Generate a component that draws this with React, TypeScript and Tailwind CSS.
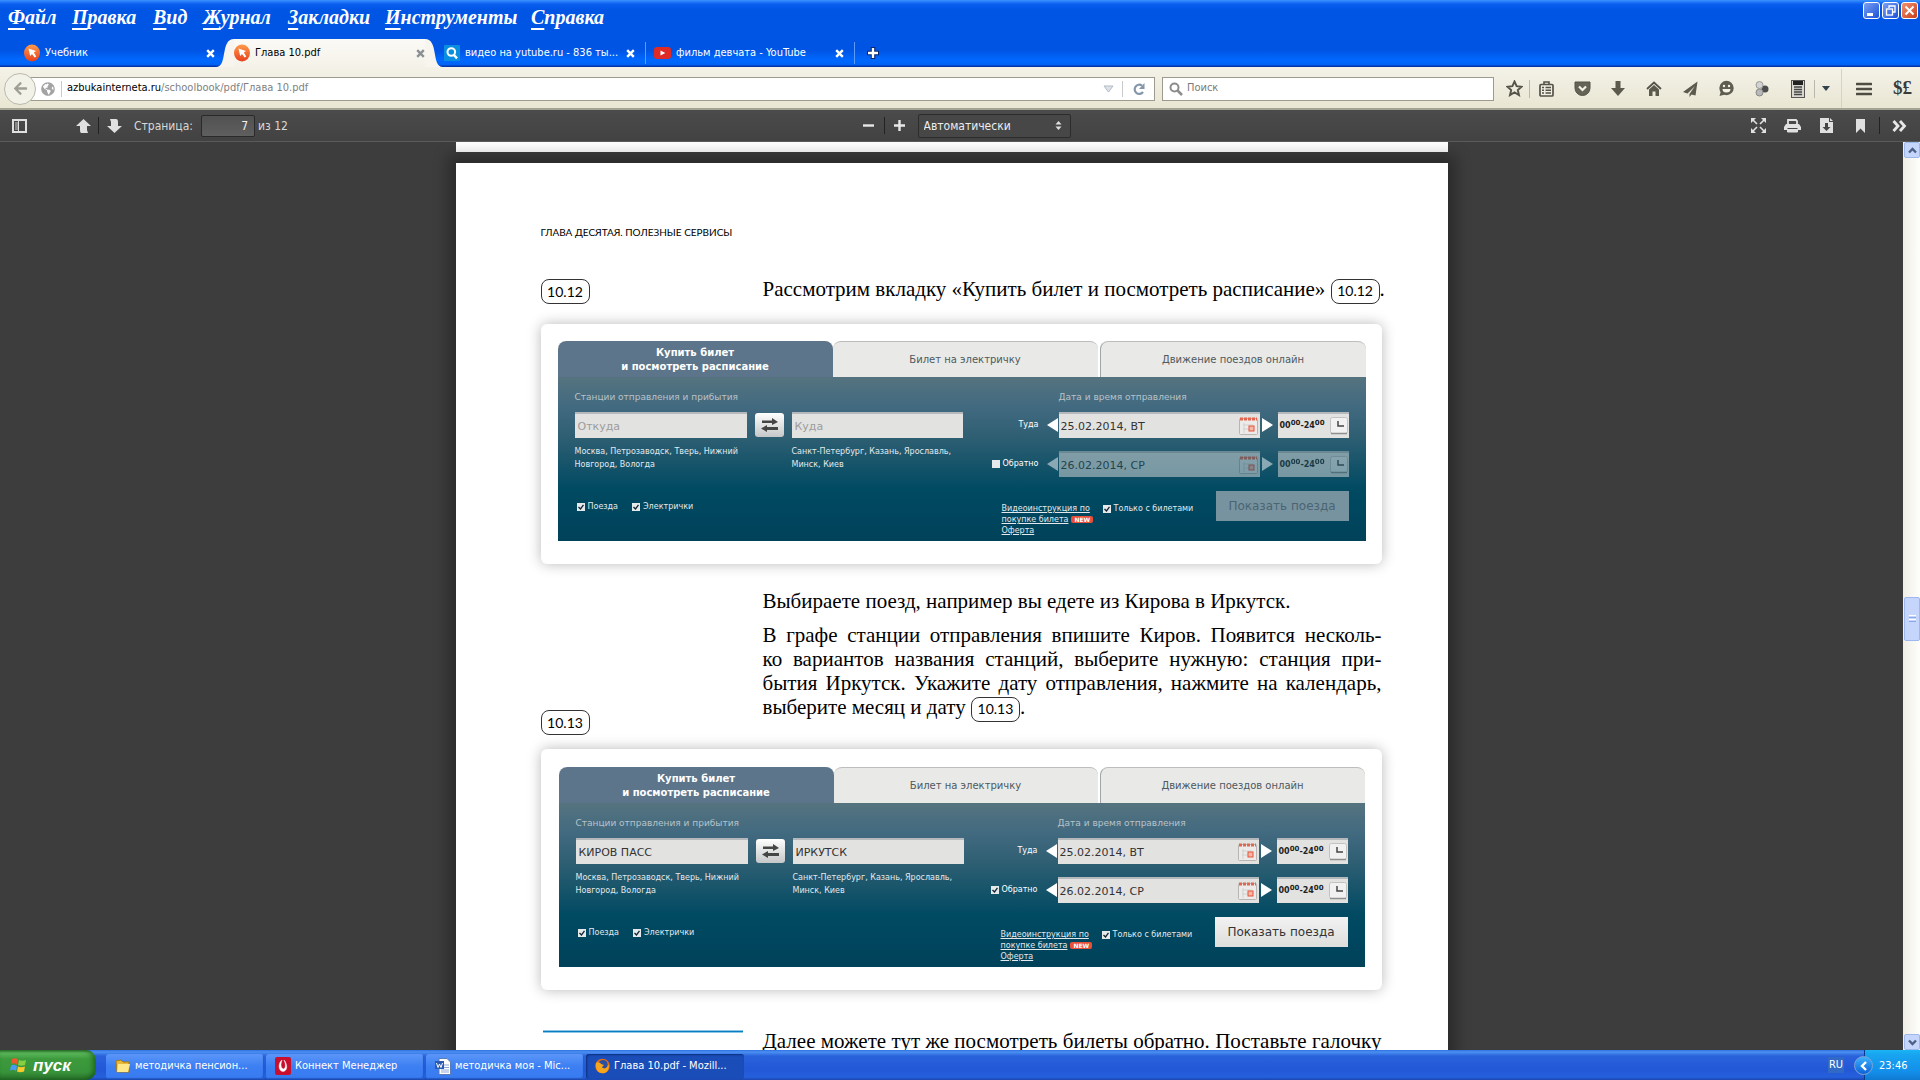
import React from "react";
import { FaArrowLeft, FaGlobeAmericas } from "react-icons/fa";

const ui = "font-['DejaVu_Sans_Condensed','DejaVu_Sans',sans-serif]";

const menus = [
  { first: "Ф", rest: "айл", w: "w-[64px]" },
  { first: "П", rest: "равка", w: "w-[81px]" },
  { first: "В", rest: "ид", w: "w-[50px]" },
  { first: "Ж", rest: "урнал", w: "w-[85px]" },
  { first: "З", rest: "акладки", w: "w-[97px]" },
  { first: "И", rest: "нструменты", w: "w-[146px]" },
  { first: "С", rest: "правка", w: "w-[80px]" },
];

function CloseX({ color }: { color: string }) {
  return (
    <button type="button" aria-label="Закрыть вкладку" className="shrink-0">
      <svg width="9" height="9" viewBox="0 0 9 9">
        <path d="M1.2 1.2L7.8 7.8M7.8 1.2L1.2 7.8" stroke={color} strokeWidth="2.4" />
      </svg>
    </button>
  );
}

function BookIcon() {
  return (
    <svg width="16" height="18" viewBox="0 0 16 18" className="shrink-0">
      <defs>
        <linearGradient id="orange" x1="0" y1="0" x2="0" y2="1">
          <stop offset="0" stopColor="#ff9a4a" />
          <stop offset="1" stopColor="#e8401c" />
        </linearGradient>
      </defs>
      <ellipse cx="8" cy="9" rx="8" ry="8.5" fill="url(#orange)" />
      <path d="M4.5 4.5L12 7L9.8 8.5L12.3 12.4L10.6 13.6L8 9.9L6.2 12z" fill="#fff" />
    </svg>
  );
}

function SearchTabIcon() {
  return (
    <svg width="16" height="16" viewBox="0 0 16 16" className="shrink-0">
      <rect width="16" height="16" rx="1" fill="#0a8ee0" />
      <circle cx="7.3" cy="7" r="3.8" fill="none" stroke="#fff" strokeWidth="2" />
      <path d="M10 10L13 13.4" stroke="#fff" strokeWidth="2.4" />
    </svg>
  );
}

function YoutubeIcon() {
  return (
    <svg width="17" height="12" viewBox="0 0 17 12" className="shrink-0">
      <rect width="17" height="12" rx="3" fill="#df2a26" />
      <path d="M6.5 3.5L11.3 6L6.5 8.5z" fill="#fff" />
    </svg>
  );
}

function WindowButtons() {
  const base = "flex h-[17px] w-[17px] items-center justify-center rounded-[3px] border border-white";
  return (
    <div className="flex gap-[2px] pt-[2px] pr-[2px]">
      <button type="button" aria-label="Свернуть" className={base + " bg-gradient-to-br from-[#7b9ff0] to-[#1a4fd8]"}>
        <svg width="13" height="13" viewBox="0 0 13 13"><rect x="2" y="9" width="6" height="3" fill="#fff" /></svg>
      </button>
      <button type="button" aria-label="Восстановить" className={base + " bg-gradient-to-br from-[#7b9ff0] to-[#1a4fd8]"}>
        <svg width="13" height="13" viewBox="0 0 13 13" fill="none" stroke="#fff"><path d="M5 4V2H11V8H9" strokeWidth="1.3" /><rect x="2.5" y="5" width="6" height="6" strokeWidth="1.3" /></svg>
      </button>
      <button type="button" aria-label="Закрыть" className={base + " bg-gradient-to-br from-[#f0916f] to-[#c93a12]"}>
        <svg width="13" height="13" viewBox="0 0 13 13"><path d="M2.5 2.5L10.5 10.5M10.5 2.5L2.5 10.5" stroke="#fff" strokeWidth="2" /></svg>
      </button>
    </div>
  );
}

function TitleArea() {
  return (
    <header className="flex shrink-0 flex-col bg-[linear-gradient(to_bottom,#3a93ff_0,#0a5ef0_4px,#0055e5_10px,#0054e3_50px,#0068ff_60px,#0062f4_65px,#0434a8_66px)]">
      <div className="flex h-[39px] items-start justify-between">
        <nav className="flex h-[34px] pl-2 font-['Liberation_Serif',serif] text-[20px] font-bold text-white italic">
          {menus.map((m) => (
            <button type="button" key={m.first + m.rest} className={"text-left whitespace-nowrap " + m.w}>
              <span className="underline underline-offset-4">{m.first}</span>
              {m.rest}
            </button>
          ))}
        </nav>
        <WindowButtons />
      </div>
      <div className={"flex h-[28px] shrink-0 text-[11px] text-white " + ui}>
        <div className="flex w-[216px] items-center gap-[5px] pr-px pl-6">
          <BookIcon />
          <span className="flex-1">Учебник</span>
          <CloseX color="#fff" />
        </div>
        <svg width="18" height="28" viewBox="0 0 18 28"><path d="M0 28C12 28 4 0 18 0V28z" fill="#f7f5ee" /></svg>
        <div className="flex w-[191px] items-center gap-[5px] bg-gradient-to-b from-[#fbfaf6] to-[#f4f2e8] text-black">
          <BookIcon />
          <span className="flex-1">Глава 10.pdf</span>
          <CloseX color="#8b8f96" />
        </div>
        <svg width="18" height="28" viewBox="0 0 18 28"><path d="M18 28C6 28 14 0 0 0V28z" fill="#f7f5ee" /></svg>
        <div className="flex w-[203px] items-center gap-[5px] pl-px">
          <SearchTabIcon />
          <span className="flex-1 whitespace-nowrap">видео на yutube.ru - 836 ты...</span>
          <CloseX color="#fff" />
          <span className="ml-[5px] h-[22px] w-px bg-[#5c9cff]" />
        </div>
        <div className="flex w-[209px] items-center gap-[5px] pl-2">
          <YoutubeIcon />
          <span className="flex-1 whitespace-nowrap">фильм девчата - YouTube</span>
          <CloseX color="#fff" />
          <span className="ml-[5px] h-[22px] w-px bg-[#5c9cff]" />
        </div>
        <button type="button" aria-label="Новая вкладка" className="px-3">
          <svg width="12" height="12" viewBox="0 0 12 12"><path d="M6 0V12M0 6H12" stroke="#04246c" strokeWidth="4.5" /><path d="M6 1V11M1 6H11" stroke="#fff" strokeWidth="2.4" /></svg>
        </button>
      </div>
    </header>
  );
}

function Tool({ label, children, w = "w-9" }: { label: string; children: React.ReactNode; w?: string }) {
  return (
    <button type="button" aria-label={label} className={"flex h-8 items-center justify-center text-[#55524a] " + w}>
      {children}
    </button>
  );
}

function NavBar() {
  return (
    <div className={"flex h-[43px] shrink-0 items-center border-b-2 border-[#a5a392] bg-gradient-to-b from-[#f4f2e8] to-[#e9e6d3] pt-[2px] text-[11px] " + ui}>
      <button type="button" aria-label="Назад" className="z-10 ml-1 flex h-8 w-8 shrink-0 items-center justify-center rounded-full border border-[#b9b9ae] bg-[#f3f2e8] text-[#a09f95]">
        <FaArrowLeft size={15} />
      </button>
      <div className="-ml-2 flex h-6 flex-1 items-center border border-[#9c9b8d] bg-white pl-[12px]">
        <FaGlobeAmericas size={14} className="shrink-0 text-[#a3a3a3]" />
        <span className="mr-[5px] ml-[6px] h-4 w-px bg-[#c9c9c9]" />
        <label className="flex flex-1 items-center">
          <span className="text-black">azbukainterneta.ru</span>
          <span className="text-[#7f7f7f]">/schoolbook/pdf/Глава 10.pdf</span>
          <input aria-label="Адрес" className="w-4 flex-1 outline-none" />
        </label>
        <svg width="11" height="8" viewBox="0 0 11 8"><path d="M1 1H10L5.500 7z" fill="#dde3ea" stroke="#b3bac2" /></svg>
        <span className="mx-2 h-4 w-px bg-[#c9c9c9]" />
        <button type="button" aria-label="Обновить" className="mr-2 ml-[1px]">
          <svg width="14" height="14" viewBox="0 0 14 14"><path d="M11 10A4.600 4.600 0 1 1 10 3.600" fill="none" stroke="#8496a9" strokeWidth="2.200" /><path d="M12.500 1V7H7z" fill="#8496a9" /></svg>
        </button>
      </div>
      <label className="ml-[7px] flex h-6 w-[332px] items-center gap-1 border border-[#9c9b8d] bg-white pl-[6px]">
        <svg width="14" height="14" viewBox="0 0 14 14"><circle cx="5.500" cy="5.500" r="4" fill="none" stroke="#8c8c8c" strokeWidth="2" /><path d="M8.500 8.500L13 13" stroke="#8c8c8c" strokeWidth="2.500" /></svg>
        <input placeholder="Поиск" aria-label="Поиск" className="flex-1 outline-none placeholder:text-[#7a7a7a]" />
      </label>
      <div className="flex items-center pl-[5px]">
        <Tool label="Добавить закладку" w="w-[30px]">
          <svg width="17" height="17" viewBox="0 0 17 17"><path d="M8.500 1.500L10.600 6.200L15.600 6.700L11.800 10L13 15L8.500 12.400L4 15L5.200 10L1.400 6.700L6.400 6.200z" fill="none" stroke="#55524a" strokeWidth="1.900" /></svg>
        </Tool>
        <span className="h-[18px] w-px bg-[#b8b8ae]" />
        <Tool label="Закладки" w="w-8">
          <svg width="15" height="16" viewBox="0 0 15 16"><path d="M5 3V1H10V3" fill="none" stroke="#55524a" strokeWidth="1.600" /><rect x="1" y="3.500" width="13" height="11.500" rx="1" fill="#f0eee0" stroke="#55524a" strokeWidth="1.700" /><path d="M3 6.500H5M6.500 6.500H12M3 9.300H5M6.500 9.300H12M3 12H5M6.500 12H12" stroke="#55524a" strokeWidth="1.500" /></svg>
        </Tool>
        <Tool label="Pocket" w="w-10">
          <svg width="17" height="15" viewBox="0 0 17 15"><path d="M1 1H16V7A7.500 7.500 0 0 1 1 7z" fill="#656256" stroke="#55524a" /><path d="M5 5.500L8.500 9L12 5.500" fill="none" stroke="#f4f2e6" strokeWidth="2.200" /></svg>
        </Tool>
        <Tool label="Загрузки" w="w-8">
          <svg width="14" height="15" viewBox="0 0 14 15"><path d="M4.500 0H9.500V7H14L7 15L0 7H4.500z" fill="#5c594d" /></svg>
        </Tool>
        <Tool label="Домой" w="w-10">
          <svg width="16" height="15" viewBox="0 0 16 15"><path d="M1 8L8 1.500L15 8" fill="none" stroke="#55524a" strokeWidth="1.800" /><path d="M3 8.500L8 4L13 8.500V15H9.500V10.500H6.500V15H3z" fill="#5c594d" /></svg>
        </Tool>
        <Tool label="Отправить" w="w-8">
          <svg width="15" height="16" viewBox="0 0 15 16"><path d="M14.500 .5L0 11L4.500 12.500L12 5L6.500 13L6.500 16L8.500 13.600L12.500 14.500z" fill="#5c594d" /></svg>
        </Tool>
        <Tool label="Чат" w="w-10">
          <svg width="17" height="17" viewBox="0 0 17 17"><circle cx="8.500" cy="8" r="7.200" fill="#5f5c50" /><path d="M3 11L1.500 16L7 14.500z" fill="#5f5c50" /><circle cx="6" cy="6" r="1.200" fill="#f4f2e6" /><circle cx="11" cy="6" r="1.200" fill="#f4f2e6" /><path d="M4.500 9H12.500A4 3.500 0 0 1 4.500 9z" fill="#f4f2e6" /></svg>
        </Tool>
        <Tool label="Расширение" w="w-8">
          <svg width="14" height="16" viewBox="0 0 14 16"><circle cx="10" cy="8" r="3.500" fill="#4c4c4c" /><circle cx="4.500" cy="4" r="3.500" fill="#d2d2d2" stroke="#999" /><circle cx="4.500" cy="11.500" r="3.500" fill="#b8b8b8" stroke="#888" /></svg>
        </Tool>
        <Tool label="Счётчик" w="w-10">
          <svg width="14" height="18" viewBox="0 0 14 18"><rect x=".5" y=".5" width="13" height="17" fill="#d8d8d0" stroke="#555" /><rect x="2" y="1" width="10" height="4" fill="#222" /><path d="M3 7H11M3 9.500H11M3 12H11M3 14.500H11" stroke="#444" strokeWidth="1.400" /></svg>
        </Tool>
        <span className="-ml-1 h-[18px] w-px bg-[#b8b8ae]" />
        <Tool label="Ещё" w="w-[22px]"><svg width="8" height="5" viewBox="0 0 8 5"><path d="M0 0H8L4 5z" fill="#33424f" /></svg></Tool>
        <span className="ml-1 h-[39px] w-px bg-[#d5d3c4]" />
        <Tool label="Меню" w="w-[43px]"><svg width="16" height="14" viewBox="0 0 16 14"><path d="M1 2H15M1 7H15M1 12H15" stroke="#4e4b43" strokeWidth="2.600" strokeLinecap="round" /></svg></Tool>
        <button type="button" className="w-[35px] text-center font-['Liberation_Serif',serif] text-[19px] font-bold text-[#3a3a3a]">$£</button>
      </div>
    </div>
  );
}

function PdfButton({ label, children }: { label: string; children: React.ReactNode }) {
  return (
    <button type="button" aria-label={label} className="flex h-6 w-[30px] items-center justify-center text-[#e0e0e0]">
      {children}
    </button>
  );
}

function Divider() {
  return <span className="h-[17px] w-px bg-[#222]" />;
}

function PdfToolbar() {
  return (
    <div className={"grid h-[32px] shrink-0 grid-cols-[1fr_auto_1fr] items-center border-b border-[#5a5a5a] bg-gradient-to-b from-[#4b4b4b] to-[#424242] text-[12px] text-[#d9d9d9] " + ui}>
      <div className="flex items-center pl-1">
        <PdfButton label="Боковая панель">
          <svg width="15" height="14" viewBox="0 0 15 14"><rect x="1" y="1" width="13" height="12" fill="none" stroke="#e0e0e0" strokeWidth="2" /><rect x="3" y="3" width="3" height="8" fill="#888" /><path d="M6.500 2V12" stroke="#e0e0e0" /></svg>
        </PdfButton>
        <span className="w-[34px]" />
        <PdfButton label="Предыдущая страница">
          <svg width="15" height="14" viewBox="0 0 15 14"><path d="M7.500 0L15 7H11V11L12 14H5Q4 14 4 11V7H0z" fill="#e0e0e0" /></svg>
        </PdfButton>
        <Divider />
        <PdfButton label="Следующая страница">
          <svg width="15" height="14" viewBox="0 0 15 14"><path d="M7.500 14L15 7H11V3Q11 0 9 0H3L4 3V7H0z" fill="#e0e0e0" /></svg>
        </PdfButton>
        <label className="flex items-center pl-[5px]">
          <span className="w-[67px]">Страница:</span>
          <input defaultValue="7" className="h-[22px] w-[54px] rounded-[2px] border border-[#2a2a2a] bg-gradient-to-b from-[#515151] to-[#5f5f5f] pr-[6px] text-right text-[#f0f0f0]" />
        </label>
        <span className="pl-[3px]">из 12</span>
      </div>
      <div className="flex items-center pl-1">
        <PdfButton label="Уменьшить"><svg width="11" height="11" viewBox="0 0 11 11"><path d="M0 5.500H11" stroke="#e8e8e8" strokeWidth="2.400" /></svg></PdfButton>
        <Divider />
        <PdfButton label="Увеличить"><svg width="11" height="11" viewBox="0 0 11 11"><path d="M0 5.500H11M5.500 0V11" stroke="#e8e8e8" strokeWidth="2.400" /></svg></PdfButton>
        <div className="relative ml-[3px]">
          <select aria-label="Масштаб" className="h-6 w-[153px] appearance-none rounded-[2px] border border-[#2c2c2c] bg-[#474747] pl-[5px] text-[12px] text-[#ededed]">
            <option>Автоматически</option>
          </select>
          <svg width="7" height="9" viewBox="0 0 7 9" className="pointer-events-none absolute top-[7px] right-[9px]"><path d="M3.500 0L6.500 3.500H.5zM3.500 9L.5 5.500H6.500z" fill="#e0e0e0" /></svg>
        </div>
      </div>
      <div className="flex items-center justify-end gap-1 pr-[6px]">
        <PdfButton label="Во весь экран"><svg width="15" height="15" viewBox="0 0 15 15"><path d="M0 0H5L0 5zM15 0V5L10 0zM0 15V10L5 15zM15 15H10L15 10z" fill="#e0e0e0" /><path d="M1 1L6 6M14 1L9 6M1 14L6 9M14 14L9 9" stroke="#e0e0e0" strokeWidth="1.600" /></svg></PdfButton>
        <PdfButton label="Печать"><svg width="17" height="14" viewBox="0 0 17 14"><path d="M4 5V1H12L13 2V5" fill="none" stroke="#e0e0e0" strokeWidth="1.800" /><path d="M2 5H15L17 8V11H14V9H3V11H0V8z" fill="#e0e0e0" /><path d="M3.500 9V13H13.500V9" fill="#e0e0e0" stroke="#e0e0e0" /><path d="M3.500 9.500H13.500" stroke="#444" /></svg></PdfButton>
        <PdfButton label="Скачать"><svg width="13" height="15" viewBox="0 0 13 15"><path d="M0 0H9V4H13V15H0z" fill="#e0e0e0" /><path d="M10 0L13 3H10z" fill="#e0e0e0" /><path d="M6.500 13L2.500 9H5V5H8V9H10.500z" fill="#444" /></svg></PdfButton>
        <PdfButton label="Закладка"><svg width="9" height="14" viewBox="0 0 9 14"><path d="M0 0H9V14L4.500 9.500L0 14z" fill="#e0e0e0" /></svg></PdfButton>
        <Divider />
        <PdfButton label="Инструменты"><svg width="15" height="12" viewBox="0 0 15 12"><path d="M1.500 1L6 6L1.500 11M8 1L12.500 6L8 11" fill="none" stroke="#e8e8e8" strokeWidth="2.800" /></svg></PdfButton>
      </div>
    </div>
  );
}

function Badge({ children }: { children: string }) {
  return (
    <span className="-my-1 inline-flex h-[25px] w-[49px] items-center justify-center rounded-lg border border-[#333] align-middle font-['Lato',sans-serif] text-[14px] leading-none">
      {children}
    </span>
  );
}

function Check({ label, checked }: { label: string; checked: boolean }) {
  return (
    <label className="flex items-center gap-[3px] whitespace-nowrap">
      <input type="checkbox" defaultChecked={checked} className="peer sr-only" />
      <span className="flex h-2 w-2 items-center justify-center bg-[#e6e9ea]">
        {checked && <svg width="6" height="6" viewBox="0 0 6 6"><path d="M.5 3L2.500 5L5.500 .8" fill="none" stroke="#123" strokeWidth="1.300" /></svg>}
      </span>
      {label}
    </label>
  );
}

const field = "h-[26px] min-w-0 border-t-2 border-[#b5b9bb] bg-[#e2e2e1] text-[11px] leading-none outline-none";

function DateRow({ label, date, disabled = false }: { label: React.ReactNode; date: string; disabled?: boolean }) {
  const dim = disabled ? "opacity-50" : "";
  return (
    <div className="flex items-center">
      <div className="flex w-[44px] justify-end text-[8px] text-white">{label}</div>
      <div className={"flex flex-1 items-center " + dim}>
        <button type="button" aria-label="Предыдущий день" disabled={disabled} className="ml-2 w-3">
          <svg width="11" height="14" viewBox="0 0 11 14"><path d="M11 0V14L0 7z" fill="#fff" /></svg>
        </button>
        <label className={"flex flex-1 items-center pr-[2px] pl-[2px] text-[#333] " + field}>
          <input defaultValue={date} aria-label="Дата" disabled={disabled} className="min-w-0 flex-1 outline-none" />
          <svg width="19" height="18" viewBox="0 0 19 18"><rect x=".5" y="1.500" width="18" height="16" rx="1" fill="#ecebea" stroke="#b9b5b2" /><path d="M1 2H18" stroke="#e2664f" strokeWidth="3" strokeDasharray="3 1" /><path d="M4 8H14M4 12H14M5 6V16" stroke="#d3d0ce" /><rect x="10" y="9" width="5" height="5" fill="#f6b7a8" stroke="#e4553a" /></svg>
        </label>
        <button type="button" aria-label="Следующий день" disabled={disabled} className="ml-[2px] w-4">
          <svg width="11" height="14" viewBox="0 0 11 14"><path d="M0 0V14L11 7z" fill="#fff" /></svg>
        </button>
        <button type="button" aria-label="Время" disabled={disabled} className={"flex w-[71px] items-center pl-[2px] text-[#222] " + field}>
          <span className="flex-1 text-left text-[8px] font-bold whitespace-nowrap">
            00<sup className="text-[7px]">00</sup>-24<sup className="text-[7px]">00</sup>
          </span>
          <svg width="19" height="18" viewBox="0 0 19 18"><rect x=".5" y=".5" width="17" height="16" rx="2" fill="#f1f1f1" stroke="#c2c2c2" /><path d="M1 16.500H17" stroke="#8f8f8f" strokeWidth="1.500" /><path d="M8 4V9H14" fill="none" stroke="#444" strokeWidth="1.500" /></svg>
        </button>
      </div>
    </div>
  );
}

function BookingPanel({ from = "", to = "", back }: { from?: string; to?: string; back: boolean }) {
  const tab = "flex h-9 flex-1 items-center justify-center rounded-t-lg border-t border-[#bdbdbb] bg-[#e9e9e7] text-[#4d5a60]";
  return (
    <div className="h-[200px] overflow-hidden rounded-tl-lg bg-[linear-gradient(to_bottom,#5d768a_0,#55737f_37px,#426a80_65px,#2f5f73_95px,#004a62_148px,#00425a_100%)] font-['DejaVu_Sans',sans-serif]">
      <div className="flex h-9 bg-white text-[10px]">
        <button type="button" className="w-[275px] rounded-t-lg bg-[#5c758a] pt-px leading-[14px] font-bold text-white">
          Купить билет
          <br />
          и посмотреть расписание
        </button>
        <button type="button" className={tab}>Билет на электричку</button>
        <button type="button" className={tab + " ml-[2px] border-l border-l-[#9fa5a8]"}>Движение поездов онлайн</button>
      </div>
      <div className="flex justify-between pr-[17px] pl-[17px] text-[8px] text-[#e3e9ec]">
        <div className="w-[388px] pt-[14px]">
          <h3 className="h-[21px] text-[9px] leading-[12px] text-[#b9c2c8]">Станции отправления и прибытия</h3>
          <div className="grid grid-cols-[172px_29px_171px] gap-x-2">
            <input aria-label="Откуда" placeholder="Откуда" defaultValue={from} className={"w-full pl-[3px] text-[#333] placeholder:text-[#9c9c9c] " + field} />
            <button type="button" aria-label="Поменять местами" className="flex h-6 items-center justify-center self-center rounded-[3px] bg-gradient-to-b from-white to-[#c5c7c8]">
              <svg width="17" height="14" viewBox="0 0 17 14"><path d="M1 2.500H11V0L17 4L11 7V5H1zM17 9H6V7L0 10.500L6 14V12H17z" fill="#454545" /></svg>
            </button>
            <input aria-label="Куда" placeholder="Куда" defaultValue={to} className={"w-full pl-[3px] text-[#333] placeholder:text-[#9c9c9c] " + field} />
            <p className="mt-[7px] leading-[13px]">Москва, Петрозаводск, Тверь, Нижний<br />Новгород, Вологда</p>
            <span />
            <p className="mt-[7px] leading-[13px] whitespace-nowrap">Санкт-Петербург, Казань, Ярославль,<br />Минск, Киев</p>
          </div>
          <div className="flex gap-[14px] pt-[24px] pl-[2px]">
            <Check label="Поезда" checked />
            <Check label="Электрички" checked />
          </div>
        </div>
        <div className="w-[354px] pt-[14px]">
          <h3 className="h-[21px] pl-16 text-[9px] leading-[12px] text-[#b9c2c8]">Дата и время отправления</h3>
          <div className="flex flex-col gap-[13px]">
            <DateRow label="Туда" date="25.02.2014, ВТ" />
            <DateRow label={<Check label="Обратно" checked={back} />} date="26.02.2014, СР" disabled={!back} />
          </div>
          <div className="flex items-start pt-[14px] pl-[7px]">
            <div className="w-[101px] pt-3 leading-[11px] whitespace-nowrap">
              <a href="#video" className="underline">Видеоинструкция по<br />покупке билета</a>
              <span className="ml-[3px] rounded-[2px] bg-[#e8503a] px-[3px] text-[6px] font-bold text-white">NEW</span>
              <br />
              <a href="#offer" className="underline">Оферта</a>
            </div>
            <div className="pt-3 leading-[11px]"><Check label="Только с билетами" checked /></div>
            <button
              type="button"
              disabled={!back}
              className={"ml-auto h-[30px] w-[133px] text-[12px] " + (back ? "bg-gradient-to-b from-[#f2f2f2] to-[#dededd] text-[#333]" : "bg-[#7893a0] text-[#4a6472]")}
            >
              Показать поезда
            </button>
          </div>
        </div>
      </div>
    </div>
  );
}

function DocumentPage() {
  const card = "rounded-md bg-white shadow-[0_0_14px_rgba(0,0,0,0.28)]";
  const full = "block [text-align-last:justify]";
  return (
    <article className="mx-auto mt-[11px] h-[1400px] w-full max-w-[992px] bg-white pt-[61px] pr-[66px] pl-[85px] font-['Liberation_Serif',serif] text-[21px] leading-6 text-black shadow-[0_0_14px_8px_rgba(0,0,0,0.3)]">
      <h2 className="h-4 font-['Lato',sans-serif] text-[10px] leading-4">ГЛАВА ДЕСЯТАЯ. ПОЛЕЗНЫЕ СЕРВИСЫ</h2>
      <div className="mt-[37px] grid h-[27px] grid-cols-[222px_1fr]">
        <div className="flex items-end pb-1"><Badge>10.12</Badge></div>
        <p className="whitespace-nowrap">Рассмотрим вкладку «Купить билет и посмотреть расписание» <Badge>10.12</Badge>.</p>
      </div>
      <div className={"mt-5 pt-[17px] pr-4 pb-[23px] pl-[17px] " + card}>
        <BookingPanel back={false} />
      </div>
      <div className="mt-[25px] grid grid-cols-[222px_1fr]">
        <div className="flex items-end pb-1"><Badge>10.13</Badge></div>
        <div className="pb-4">
          <p>Выбираете поезд, например вы едете из Кирова в Иркутск.</p>
          <p className="mt-[10px] whitespace-nowrap">
            <span className={full}>В графе станции отправления впишите Киров. Появится несколь-</span>
            <span className={full}>ко вариантов названия станций, выберите нужную: станция при-</span>
            <span className={full}>бытия Иркутск. Укажите дату отправления, нажмите на календарь,</span>
            <span className="block">выберите месяц и дату <Badge>10.13</Badge>.</span>
          </p>
        </div>
      </div>
      <div className={"mt-[14px] pt-[18px] pr-[17px] pb-[23px] pl-[18px] " + card}>
        <BookingPanel from="КИРОВ ПАСС" to="ИРКУТСК" back />
      </div>
      <div className="mt-[39px] grid grid-cols-[222px_1fr]">
        <div className="mt-px mr-5 ml-[2px] h-[3px] border-y border-[#8cc8e6] bg-[#0a7cc4]" />
        <p className="whitespace-nowrap"><span className={full}>Далее можете тут же посмотреть билеты обратно. Поставьте галочку</span></p>
      </div>
    </article>
  );
}

function ScrollButton({ up = false }: { up?: boolean }) {
  return (
    <button type="button" aria-label={up ? "Вверх" : "Вниз"} className="flex h-4 w-full items-center justify-center rounded-[2px] border border-[#9db8ee] bg-[#c6d5fb]">
      <svg width="9" height="7" viewBox="0 0 9 7"><path d={up ? "M1 5.500L4.500 2L8 5.500" : "M1 1.500L4.500 5L8 1.500"} fill="none" stroke="#4d6185" strokeWidth="2.400" /></svg>
    </button>
  );
}

function Viewer() {
  return (
    <main className="flex min-h-0 flex-1 bg-[#3d3d3d]">
      <div className="min-w-0 flex-1 overflow-hidden">
        <div className="mx-auto h-[10px] w-full max-w-[992px] bg-white" />
        <DocumentPage />
      </div>
      <div className="flex w-[17px] flex-col bg-gradient-to-r from-[#f0eee6] to-[#fefefb] pl-px">
        <ScrollButton up />
        <div className="flex-[438]" />
        <div className="flex h-11 flex-col items-center justify-center gap-px rounded-[2px] border border-[#9db8ee] bg-[#c6d5fb]">
          <span className="h-px w-[7px] bg-white" />
          <span className="h-px w-[7px] bg-[#8ca8e6]" />
          <span className="h-px w-[7px] bg-white" />
          <span className="h-px w-[7px] bg-[#8ca8e6]" />
        </div>
        <div className="flex-[393]" />
        <ScrollButton />
      </div>
    </main>
  );
}

const tasks = [
  {
    text: "методичка пенсион...",
    icon: <svg width="16" height="16" viewBox="0 0 16 16"><path d="M1 3L6 2L8 4H14V14H2z" fill="#e8b83a" stroke="#a87a10" /><path d="M3 6H15L13 14H2z" fill="#ffe88a" /></svg>,
  },
  {
    text: "Коннект Менеджер",
    icon: <svg width="16" height="18" viewBox="0 0 16 18"><rect width="16" height="18" rx="2" fill="#c8102e" /><path d="M7 3C3 6 3 14 8 14.500C13 14 12.500 7 9 3C11 7 11 11 8.500 12C5.500 11 5.500 7 7 3" fill="#fff" stroke="#fff" strokeWidth=".5" /></svg>,
  },
  {
    text: "методичка моя - Mic...",
    icon: <svg width="16" height="17" viewBox="0 0 16 17"><path d="M4 .5H12L15.500 4V16.500H4z" fill="#fff" stroke="#5b7bb5" /><path d="M9 7H14M9 9.500H14M6 12H14M6 14H14" stroke="#8aa5d8" /><rect x="0" y="3" width="9" height="8" fill="#2b5bb0" /><path d="M1.500 5L3 9.500L4.500 6L6 9.500L7.500 5" fill="none" stroke="#fff" /></svg>,
  },
  {
    text: "Глава 10.pdf - Mozill...",
    icon: <svg width="15" height="16" viewBox="0 0 15 16"><circle cx="7.500" cy="8" r="7.300" fill="#e66a10" /><circle cx="8" cy="6.500" r="4.600" fill="#2b4fa0" /><path d="M1 5C2 4 5 4 6 6L9 7L7 9C9 12 13 10 13.500 6C15 12 11 15.500 7.500 15.300C3 15 0 11 1 5" fill="#f7a51b" /></svg>,
  },
];

function Taskbar() {
  return (
    <footer className={"flex h-[30px] shrink-0 bg-[linear-gradient(to_bottom,#2f6fe0_0,#4a90f0_2px,#2a62dc_6px,#2257d6_20px,#2660dc_27px,#1a45b0_100%)] text-[11px] text-white " + ui}>
      <button type="button" className="flex w-24 items-center gap-[6px] rounded-r-[10px] bg-[linear-gradient(to_bottom,#2e7a2e_0,#5cb85c_3px,#3c9a3c_9px,#38943a_22px,#27702a_100%)] pl-[10px] font-['Liberation_Sans',sans-serif] text-[17px] font-bold italic shadow-[inset_-3px_0_5px_rgba(0,60,0,0.5)]">
        <svg width="17" height="18" viewBox="0 0 17 18"><path d="M2 3C4 2 6 2 8 3.500L7 8.500C5 7 3 7 1 8z" fill="#f0592b" /><path d="M9 4C11 5 13.500 5 16 4L15 9C12.500 10 10 10 8 9z" fill="#86cf45" /><path d="M1 9.500C3 8.500 5 8.500 7 10L6 15C4 13.500 2 13.500 0 14.500z" fill="#4b9bf5" /><path d="M8 10.500C10 11.500 12.500 11.500 15 10.500L14 15.500C11.500 16.500 9 16.500 7 15.500z" fill="#fbc92c" /></svg>
        <span className="leading-none">пуск</span>
      </button>
      <div className="flex items-center gap-[2px] pl-[10px]">
        {tasks.map((t, i) => (
          <button
            type="button"
            key={t.text}
            className={"mt-[2px] flex h-[25px] w-[158px] items-center gap-1 rounded-[3px] pl-[9px] text-left whitespace-nowrap " + (i === 3 ? "bg-[#1b4db8] shadow-[inset_1px_1px_2px_#0d2f7c]" : "bg-gradient-to-b from-[#5b96f8] via-[#3c7ff3] to-[#387af0] shadow-[inset_-1px_-1px_1px_#2458c0]")}
          >
            {t.icon}
            <span>{t.text}</span>
          </button>
        ))}
      </div>
      <div className="ml-auto flex items-center">
        <button type="button" className="mr-[20px] bg-[#316ac5] px-[1px] leading-4">RU</button>
      </div>
      <div className="relative flex w-14 items-center border-l border-[#0a3a8a] bg-[linear-gradient(to_bottom,#1ab4f4_0,#18a4f0_5px,#128eea_22px,#0f7ad0_100%)] pl-[14px]">
        <button type="button" aria-label="Показать значки" className="absolute top-[6px] -left-[11px] flex h-[19px] w-[19px] items-center justify-center rounded-full border border-[#7ea4d8] bg-gradient-to-b from-[#3fb0fa] to-[#0f62d8]">
          <svg width="8" height="10" viewBox="0 0 8 10"><path d="M6 1L2 5L6 9" fill="none" stroke="#fff" strokeWidth="2.400" /></svg>
        </button>
        <time className="leading-none">23:46</time>
      </div>
    </footer>
  );
}

export default function App() {
  return (
    <div className="flex h-screen flex-col overflow-hidden">
      <TitleArea />
      <NavBar />
      <PdfToolbar />
      <Viewer />
      <Taskbar />
    </div>
  );
}
